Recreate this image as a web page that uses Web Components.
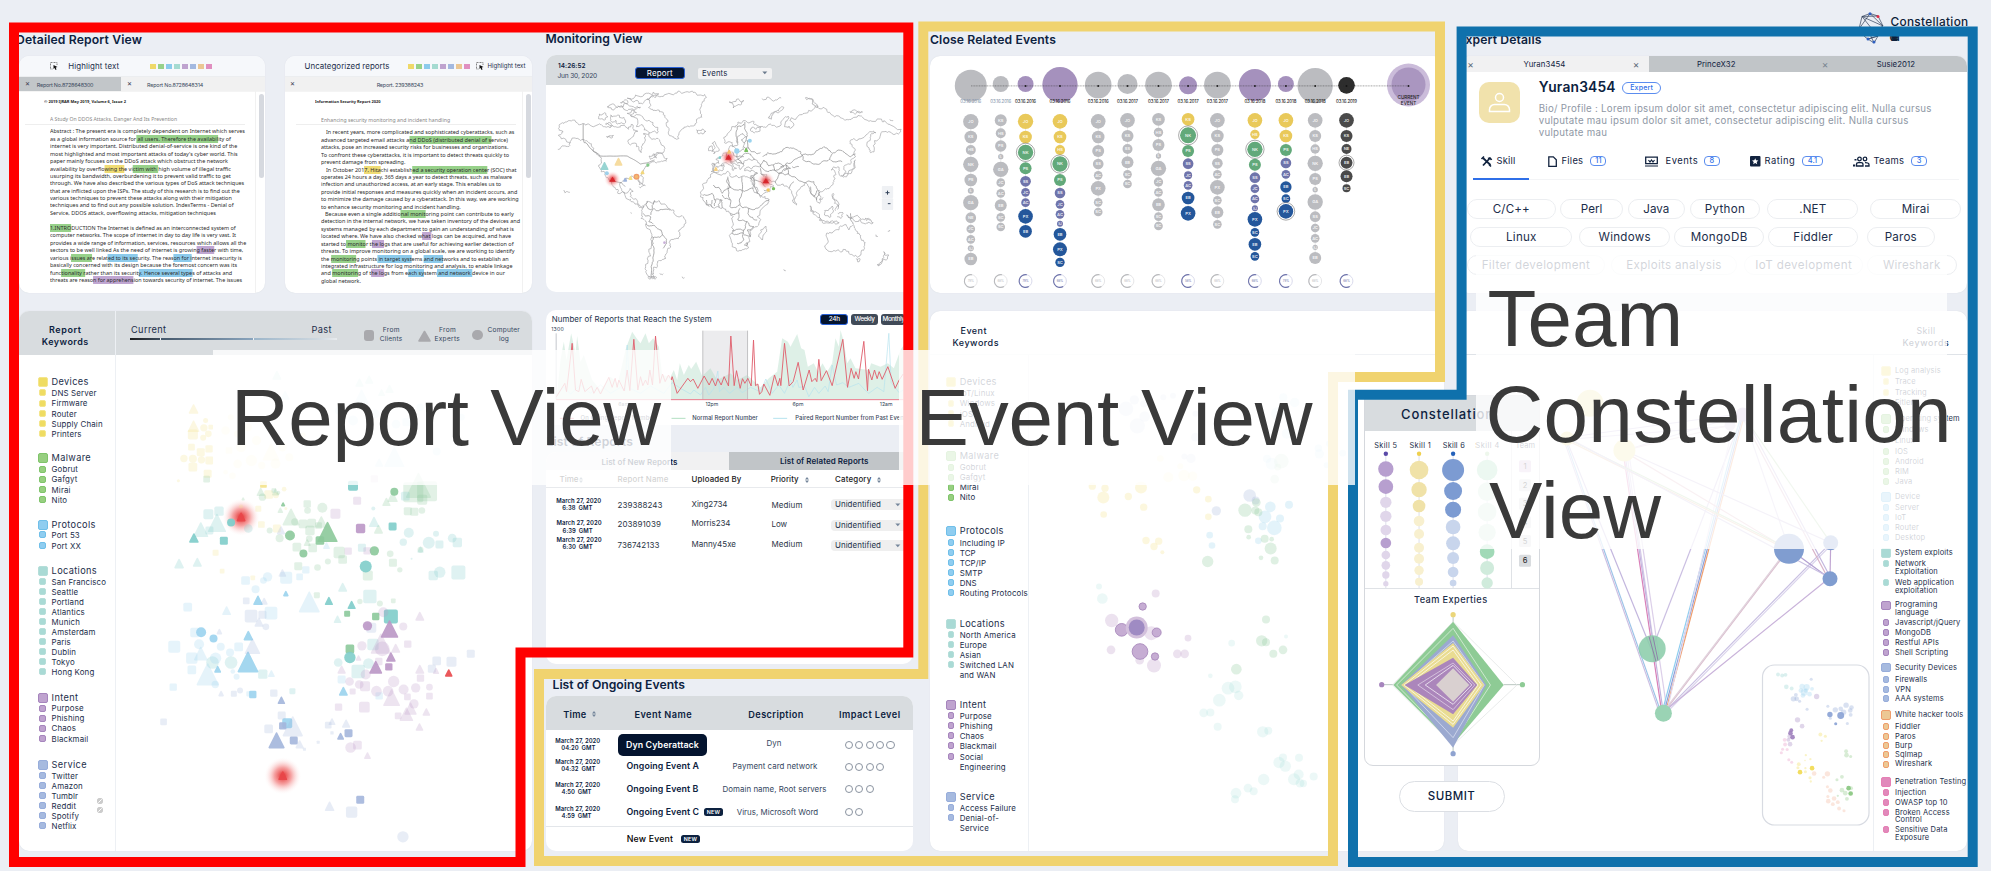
<!DOCTYPE html>
<html lang="en">
<head>
<meta charset="utf-8">
<title>Constellation Builder</title>
<style>
html,body{margin:0;padding:0}
body{width:1991px;height:871px;overflow:hidden;background:#ebeef4;font-family:Inter,"Liberation Sans",sans-serif;color:#0d2240}
</style>
</head>
<body>
<cb-app></cb-app>
<script>
const BASE = `<style>
:host{display:block;box-sizing:border-box}
*{box-sizing:border-box}
.stk{display:flex;flex-direction:column;flex:none}
.r{display:flex;height:6px;align-items:center;flex:none}
.c{flex:none;display:flex;align-items:center}
.t{white-space:pre;line-height:1.15;flex:none;display:inline-block;transform-origin:0 50%;margin-top:.7px}
.blk{flex:none}
svg{display:block;overflow:visible}
svg text{font-family:Inter,"Liberation Sans",sans-serif}
</style>`;
class Part extends HTMLElement {
  connectedCallback() {
    if (this.shadowRoot) return;
    const root = this.attachShadow({ mode: 'open' });
    root.innerHTML = BASE + this.view();
    for (const t of root.querySelectorAll('.t[data-w]')) {
      const want = +t.dataset.w, have = t.getBoundingClientRect().width;
      if (!want || !have) continue;
      if (t.dataset.m === 's') t.style.transform = `scaleX(${want / have})`;
      else t.style.letterSpacing = (want - have) / t.textContent.length + 'px';
    }
  }
}
/* text cell: x, fitted width (0 = natural), string, size, weight, colour */
const T = (x, w, s, fs = 8, fw = 400, col = '#1c2e4a', extra = '') =>
  ({ x, w, h: `<span class="t" ${w ? `data-w="${w}"` : ''} style="font-size:${fs}px;font-weight:${fw};color:${col};${extra}">${s}</span>` });
const B = (x, w, h, css, inner = '') =>
  ({ x, w, h: `<span class="c" style="justify-content:center;width:${w}px;height:${h}px;${css}">${inner}</span>` });
const rows = (x0, y0, list, w = '') => {
  let yb = y0, out = '';
  for (const [y, ...cells] of list) {
    let xb = x0;
    const inner = cells.map(c => { const m = c.x - xb; xb = c.x + c.w; return `<span class="c" style="margin-left:${m.toFixed(2)}px;width:${c.w}px">${c.h}</span>`; }).join('');
    out += `<div class="r" style="margin-top:${(y - 3 - yb).toFixed(2)}px">${inner}</div>`;
    yb = y + 3;
  }
  return `<div class="stk" ${w ? `style="width:${w}px"` : ''}>${out}</div>`;
};
/* vertical flow of blocks: [top, height, html] */
const blocks = (y0, list) => {
  let yb = y0;
  return list.map(([t, h, html]) => { const m = t - yb; yb = t + h; return `<div class="blk" style="margin-top:${m}px;height:${h}px">${html}</div>`; }).join('');
};
const f1 = n => (+n).toFixed(2);

/* ---------- section heading ---------- */
customElements.define('section-title', class extends Part {
  view() {
    const a = n => this.getAttribute(n);
    return `<style>:host{height:16px;display:flex;align-items:center;padding-left:${a('dx') || 0}px}</style>
    <span class="t" data-w="${a('w')}" style="font-size:12.2px;font-weight:600;color:#0d2240">${a('text')}</span>`;
  }
});

/* ---------- highlighted document ---------- */
const HL = { y: '#f0dc74', g: '#97d18a', b: '#8ccbec', p: '#c0a6d2' };
const SW = ['#efd969', '#97d18a', '#8ccbec', '#a5dbd1', '#bfa3cf', '#a3b9e0', '#ebc794', '#e08fc0'];
const swatches = '<span style="display:flex;gap:2.5px">' + SW.map(c => `<i style="width:5.5px;height:5.5px;background:${c}"></i>`).join('') + '</span>';
const pick = `<svg width="8" height="8" viewBox="0 0 16 16"><path d="M14 6V1H1v13h5" fill="none" stroke="#555" stroke-width="1.4" stroke-dasharray="2 1"/><path d="M7 6l8 4-3.5 1L13 15l-2 .8-1.6-3.6L7 14z" fill="#111"/></svg>`;
const K = 2.9037;
const DOC = {
  a: { x0: 19, w: 246, head: [['© 2019 IJRAR May 2019, Volume 6, Issue 2', 128, 366, 304]], sub: ['A Study On DDOS Attacks, Danger And Its Prevention', 145, 514, 357],
    ln: [[393,145,711,'Abstract : The present era is completely dependent on Internet which serves'],[417,145,670,'as a global information source for[g| all users. Therefore the availabil]ity of'],[438,145,689,'internet is very important. Distributed denial-of-service is one kind of the'],[460,145,690,"most highlighted and most important attacks of today's cyber world. This"],[483,145,662,'paper mainly focuses on the DDoS attack which obstruct the network'],[505,145,670,'availability by overflo[y|wing th]e vi[g|ctim with ]high volume of illegal traffic'],[528,145,670,'usurping its bandwidth, overburdening it to prevent valid traffic to get'],[549,145,709,'through. We have also described the various types of DoS attack techniques'],[573,145,696,'that are inflicted upon the ISPs. The study of this research is to find out the'],[594,145,673,'various techniques to prevent these attacks along with their mitigation'],[615,145,678,'techniques and to find out any possible solution. IndexTerms - Denial of'],[638,145,627,'Service, DDOS attack, overflowing attacks, mitigation techniques'],[684,145,684,'[g|1.INTRO]DUCTION The Internet is defined as an interconnected system of'],[705,145,685,'computer networks. The scope of internet in day to day life is very vast. It'],[727,145,715,'provides a wide range of information, services, resources which allows all the'],[749,145,706,'sectors to be well linked As the need of internet is growin[p|g faste]r with time,'],[772,145,702,'various i[g|ssues ar]e relat[b|ed to its sec]urity. The reas[b|on for i]nternet insecurity is'],[795,145,688,'basically concerned with its design because the foremost concern was its'],[817,145,674,'func[g|tionality r]ather than its securit[b|y. Hence several type]s of attacks and'],[840,145,703,'threats are reaso[p|n for apprehens]ion towards security of internet. The issues']] },
  b: { x0: 285, w: 247, head: [['Information Security Report 2020', 915, 1105, 304]], sub: ['Enhancing security monitoring and incident handling', 932, 1307, 360],
    ln: [[396,948,1495,'In recent years, more complicated and sophisticated cyberattacks, such as'],[419,932,1475,'advanced targeted email attacks a[g|nd DDoS (distributed denial of s]ervice)'],[441,932,1476,'attacks, pose an increased security risks for businesses and organizations.'],[464,932,1478,'To confront these cyberattacks, it is important to detect threats quickly to'],[486,932,1177,'prevent damage from spreading.'],[509,948,1501,'In October 201[y|7, Hita]chi establish[g|ed a security operation cente]r (SOC) that'],[531,932,1487,'operates 24 hours a day, 365 days a year to detect threats, such as malware'],[552,932,1455,'infection and unauthorized access, at an early stage. This enables us to'],[576,932,1502,'provide initial responses and measures quickly when an incident occurs, and'],[597,932,1506,'to minimize the damage caused by a cyberattack. In this way, we are working'],[621,932,1338,'to enhance security monitoring and incident handling.'],[642,943,1491,'Because even a single additio[g|nal monit]oring point can contribute to early'],[663,932,1510,'detection in the internal network, we have taken inventory of the devices and'],[687,932,1492,'systems managed by each department to gain an understanding of what is'],[708,932,1484,'located where. We have also checked w[p|hat ]logs can be acquired, and have'],[732,932,1491,'started to[g| monito]r t[p|he lo]gs that are useful for achieving earlier detection of'],[753,932,1494,'threats. To improve monitoring on a global scale, we are working to identify'],[777,932,1477,'the [g|monitorin]g points[b| in target syst]ems [b|and net]works and to establish an'],[798,932,1488,'integrated infrastructure for log monitoring and analysis, to enable linkage'],[819,932,1466,'and [g|monitorin]g of t[p|he lo]gs from e[b|ach sy]stem[b| and network ]device in our'],[843,932,1048,'global network.']] }
};
customElements.define('report-doc', class extends Part {
  view() {
    const k = this.getAttribute('doc'), d = DOC[k];
    const mark = s => s.replace(/\[(\w)\|([^\]]*)\]/g, (m, c, t) => `<mark style="background:${HL[c]};color:inherit">${t}</mark>`);
    const D = (x, r, s, fs, col, fw = 400) => T(x / K, (r - x) / K, mark(s), fs, fw, col, 'font-family:\'Noto Sans\',\'Open Sans\',sans-serif;line-height:1.02').h.replace('data-w', 'data-m="s" data-w');
    const cell = (x, r, s, fs, col, fw) => ({ x: x / K, w: (r - x) / K, h: D(x, r, s, fs, col, fw) });
    const top = k === 'a'
      ? rows(19, 56, [[66.4, B(50, 8, 8, '', pick), T(68.3, 51, 'Highlight text', 7.9), { x: 150.5, w: 62, h: swatches }]])
      : rows(285, 56, [[66.4, T(304.5, 85, 'Uncategorized reports', 7.9), { x: 408, w: 62, h: swatches }, B(476, 7, 8, '', pick), T(487.5, 38, 'Highlight text', 6)]]);
    const tab = k === 'a'
      ? `<div class="tab on" style="width:102px">${rows(19, 77, [[84.3, T(25, 4, '×', 7.5, 400, '#445'), T(36.8, 56.5, 'Report No.8728648300', 5.4, 400, '#3a4a60')]])}</div><div class="tab">${rows(121, 77, [[84.3, T(127, 4, '×', 7.5, 400, '#445'), T(147, 56, 'Report No.8728648314', 5.4, 400, '#3a4a60')]])}</div>`
      : `<div class="tab">${rows(285, 77, [[84.3, T(290, 4, '×', 7.5, 400, '#445'), T(376.7, 46.5, 'Report. 239388243', 5.4, 400, '#3a4a60')]])}</div>`;
    const body = [];
    d.head.forEach(h => body.push([h[3] / 3, cell(h[1], h[2], h[0], 4.2, '#222', 700)]));
    body.push([d.sub[3] / 3, cell(d.sub[1], d.sub[2], d.sub[0], 5.5, '#888')]);
    d.ln.forEach(l => body.push([l[0] / 3, cell(l[1], l[2], l[3], 5.9, '#2b2b2b')]));
    return `<style>:host{width:${d.w}px;height:237px;background:#fff;border-radius:10px;overflow:hidden;flex:none;box-shadow:0 0 1px #cfd4db}
    .bar{height:21px;background:#f6f8fb}.tabs{height:14px;display:flex;background:#f1f1f1;box-shadow:0 0 1px #bbb}.tab{height:14px;flex:1}.on{flex:none;background:#c2c6c9}
    .body{display:flex;height:202px;justify-content:space-between;background:linear-gradient(#eee,#eee) ${k === 'a' ? '6px' : '11px'} 33px/220px 1px no-repeat}
    .sb{width:10px;border-left:1px solid #f1f1f1;padding:3px 2.5px}.sb i{display:block;width:5px;height:84px;border-radius:3px;background:#d6d9df}</style>
    <div class="bar">${top}</div><div class="tabs">${tab}</div><div class="body">${rows(d.x0, 91, body, d.w - 10)}<div class="sb"><i></i></div></div>`;
  }
});

/* ---------- keyword lists ---------- */
const KC = { y: ['#efdc62', '#f4e58c'], g: ['#97cf80', '#7fc46b'], b: ['#8fcdf0', '#70bfe9'], t: ['#a9dad5', '#b5ded9'], p: ['#bfa3cf', '#a685bd'], n: ['#a6badf', '#97addb'], o: ['#ecc894', '#ef9d6c'], k: ['#e189bb', '#e680b4'] };
const KW = {
  report: { x0: 19, sq: 42.8, tx: 51.6, w: 96, hf: 9.2, f: 7.9, d: 'y*381.3 Devices|y392.3 DNS Server|y403 Firmware|y413.3 Router|y423.3 Supply Chain|y433.3 Printers|g*457.3 Malware|g469 Gobrut|g479 Gafgyt|g489.3 Mirai|g499.3 Nito|b*524.3 Protocols|b534.3 Port 53|b545.3 Port XX|t*570.3 Locations|t581.3 San Francisco|t591.3 Seattle|t601.3 Portland|t611.3 Atlantics|t621.3 Munich|t631.3 Amsterdam|t641.3 Paris|t651.3 Dublin|t661.3 Tokyo|t671.3 Hong Kong|p*697.3 Intent|p708 Purpose|p718 Phishing|p728 Chaos|p738.3 Blackmail|n*764.3 Service|n775.3 Twitter|n785.3 Amazon|n795.3 Tumblr|n805.3 Reddit|n815.3 Spotify|n825.3 Netflix' },
  event: { x0: 930, sq: 951, tx: 959.7, w: 98, hf: 9.2, f: 7.9, d: 'y*381.3 Devices|y392.3 IoT/Linux|y403 Windows|y413.3 iOS|y423.3 Android|g*455.3 Malware|g467 Gobrut|g477 Gafgyt|g487 Mirai|g497 Nito|b*530.3 Protocols|b542.3 Including IP|b552.3 TCP|b562.3 TCP/IP|b572.3 SMTP|b582.3 DNS|b592.3 Routing Protocols|t*623.3 Locations|t634.3 North America|t644.3 Europe|t654.3 Asian|t664.3 Switched LAN|-674.3 and WAN|p*704.3 Intent|p715.3 Purpose|p725.3 Phishing|p735.3 Chaos|p745.3 Blackmail|p756.3 Social|-766.3 Engineering|n*796.7 Service|n807.3 Access Failure|n817.3 Denial-of-|-827.3 Service' },
  skill: { x0: 1874, sq: 1886.4, tx: 1895.5, w: 93, hf: 7.5, f: 7.5, d: 'y*370.3 Log analysis|y381.3 Trace|y392.3 Tracking|-402.3 Fitler|g*418.3 Operating system|g429.3 Windows|-440.3 Linux|g451.3 IOS|g461.3 Android|g471.3 RIM|g481.3 Java|b*496.3 Device|b507.3 Server|b517.3 IoT|b527.3 Router|b537.3 Desktop|t*552.3 System exploits|t563.3 Network|-571.3 Exploitation|t582.3 Web application|-590.3 exploitation|p*604.8 Programing|-612.3 language|p622.3 Javascript/jQuery|p632.3 MongoDB|p642.3 Restful APIs|p652 Shell Scripting|n*667 Security Devices|n679 Firewalls|n689 VPN|n698.3 AAA systems|o*714.3 White hacker tools|o726 Fiddler|o736 Paros|o745 Burp|o754.3 Sqlmap|o764 Wireshark|k*781.3 Penetration Testing|k792.3 Injection|k802.3 OWASP top 10|k812.3 Broken Access|-820 Control|k829.3 Sensitive Data|-837.3 Exposure' }
};
customElements.define('keyword-list', class extends Part {
  view() {
    const c = KW[this.getAttribute('kind')];
    const list = c.d.split('|').map(s => {
      const m = s.match(/^(.)(\*?)([\d.]+) (.*)$/), big = !!m[2], z = big ? 9.5 : 6.8;
      const cells = [];
      if (m[1] !== '-') { const q = KC[m[1]]; cells.push(B(c.sq - z / 2, z, z, `background:${q[0]};border:.8px solid ${q[1]};border-radius:2px`)); }
      cells.push({ x: c.tx, w: 10, h: `<span class="t" style="font-size:${big ? c.hf : c.f}px;letter-spacing:${big && c.hf > 8 ? .35 : .14}px;color:#1c2e4a;font-weight:400">${m[4]}</span>` });
      return [+m[3], ...cells];
    });
    return `<style>:host{width:${c.w}px;height:497px;flex:none}</style>${rows(c.x0, 354, list)}`;
  }
});

/* ---------- scatter plots ---------- */
const FC = { y: '#f4e38a', g: '#8cc99b', t: '#7fcdca', b: '#9bd3ee', n: '#a4b6dc', p: '#bb97c6', r: '#e9474a' };
const shape = (k, x, y, s, col, op, kx) => {
  const X = x / kx, Y = y / 3, h = s / 6;
  const a = `fill="${col}" opacity="${op}"`;
  if (k === 'c') return `<circle cx="${f1(X)}" cy="${f1(Y)}" r="${f1(h)}" ${a}/>`;
  if (k === 's') return `<rect x="${f1(X - h)}" y="${f1(Y - h)}" width="${f1(2 * h)}" height="${f1(2 * h)}" rx="${f1(Math.min(2, h * .35))}" ${a}/>`;
  return `<path d="M${f1(X)} ${f1(Y - h + .5)}L${f1(X + h - .7)} ${f1(Y + h - .9)}H${f1(X - h + .7)}Z" ${a} stroke="${col}" stroke-width="1.6" stroke-linejoin="round"/>`;
};
const plot = (txt, kx, lo, hi) => txt.trim().split(/\n/).map(l => {
  const [h, ...it] = l.trim().split(/\s+/), col = FC[h[0]], op = h[1] === '!' ? hi : lo;
  return it.map(i => { const k = i[0], [x, y, s] = i.slice(1).split(','); return shape(k, +x, +y, +s, col, op, kx); }).join('');
}).join('');
const RS = `
y t562,326,28 t562,378,34 s560,402,30 c597,360,15 c592,382,22 c605,400,20 c590,412,18 s612,380,14 s556,440,20 s583,455,24 s607,445,22 c534,474,22 c560,475,24 c585,478,22 s608,480,24 s560,500,26 s603,520,24 c518,541,9 c670,350,18 c655,390,26 c690,400,22 c720,380,24 c745,420,28 c700,440,30 s665,450,20 t787,455,50 c730,480,34 c690,490,26 c760,495,22 c800,490,30 c820,440,26 c840,470,24 c880,404,16 c675,526,20 c655,515,14 s780,582,26 c825,566,14 c801,584,18 s750,625,18 s759,672,20 s804,684,24 s626,757,18 s645,812,14 s734,832,14 c830,624,9 c700,618,12
y! s765,552,20
g s600,536,20 t757,575,24 c762,590,22 t800,575,20 s795,570,14 t706,596,9 c808,577,12 t814,630,16 c893,630,20 s892,610,22 c936,622,30 t845,650,50 c856,664,22 s880,670,26 s905,668,26 s900,690,28 s925,675,20 t933,665,34 c812,713,24 c783,690,18 s862,740,26 s908,742,26 t892,727,20 c898,715,20 s985,756,34 s995,777,26 c952,783,18 s866,797,24 c922,801,20 t1099,687,26 t1122,605,24 t1140,590,30 t1215,555,75 s1240,572,60 s1200,575,60 s1226,598,30 s1184,632,24 s1203,634,24 c1225,630,20 c1133,760,20 s1141,787,24 s1068,825,30 c1161,808,16 c1221,748,18 s920,884,18 c1045,903,16 c1103,909,18 s1142,901,14
g! t822,612,12 c842,705,30 c881,759,24 s929,720,26 t951,695,60 c1145,574,24 c1087,751,28 s1008,940,18 s1091,948,22 s1016,1045,26
t s605,641,30 s636,632,28 t630,668,54 t583,688,44 s608,690,24 t520,790,28 t573,786,26 t1086,665,30 s1051,742,24 t995,861,26 s1074,888,40 t980,957,22 c1084,624,12 c1187,697,30 c1171,725,22 c1245,727,36 c1266,700,18 s1276,732,24 s1328,726,28 c1313,713,26 s1331,816,42 s1258,825,28 c1277,815,34 c617,1086,38 c671,1086,38 s763,1121,28 c982,1086,26 s1083,1032,34 c1070,1089,32 s1040,1113,40 c1195,775,6 t804,225,26 t1044,247,24 t1072,238,24 t1131,266,24 t1108,277,20 s849,1172,18 s1177,587,26 c721,684,26 t1221,748,18
t! s1025,556,30 c671,666,24 t563,713,28 s650,721,24 s1140,678,24 c1062,798,36 t955,902,24 t1021,914,24 c1016,1071,34 s1135,948,42
b t828,285,26 t1050,290,44 c985,330,26 c1025,360,30 c1090,340,26 c1150,371,26 s1180,365,24 c1220,320,22 t1145,470,60 t1101,487,24 c1268,453,24 c1340,350,20 s713,840,26 c742,866,24 c777,829,28 c765,840,20 s831,832,36 s870,829,20 s888,808,22 t948,736,20 t898,905,62 s787,938,38 s545,920,26 t658,931,26 s566,996,28 s506,1039,36 c578,1031,30 s557,1073,34 t583,1060,40 c626,1073,34 c641,1039,24 s693,1039,26 c668,1056,24 t603,1122,66 s557,1108,26 c625,1152,22 s503,1160,22 c687,1129,18 t788,1120,20 s992,1137,24 s723,1180,16 s1101,1186,22 c676,1113,14
b! t830,880,16 t749,900,28 c584,995,30 c620,1014,24 t721,1006,28 t720,1085,62 t632,1107,20 s734,1182,22 t997,1173,26 s834,1268,30
n s715,901,20 t767,903,20 s729,947,38 s762,943,24 t752,966,26 c772,979,20 t637,994,16 t733,1038,46 t642,1180,16 s679,1180,18 c697,1170,18 s795,1178,22 s818,1245,24 s780,1285,26 t850,1278,60 s475,1264,20 s953,1274,20 t964,1264,20 t1005,1270,24 s964,1297,10 s924,1325,9 t870,1332,24 s884,1346,9 s1268,1081,26 s1311,1084,30 s1367,1060,24 s1254,1105,24 t957,1518,28 s1021,1535,34 c1170,1609,34 s1078,982,30 t820,818,22 t816,690,24
n! t817,1200,22 s821,1276,22 s853,1320,24 t803,1320,48 s1012,1298,24 t989,1308,20 s1046,1498,24
p s1087,535,22 s1037,601,24 s974,640,30 s1011,752,22 s1066,751,22 c1113,935,30 t1219,948,26 c1171,978,24 s1184,1031,22 t1106,1030,60 c1110,1045,44 c1051,1036,28 t1149,1044,26 s1100,1083,22 t1041,1073,16 c1015,1143,26 t992,1108,24 s1024,1173,18 s1060,1157,30 c1043,1152,26 c1062,1122,30 c1093,1172,32 c1127,1172,32 t1137,1192,50 c1143,1143,34 c1172,1167,30 c1207,1162,28 c1247,1160,20 s1183,1189,20 s1247,1187,20 t1219,1107,26 s1221,1133,22 t1266,1112,18 s983,1220,22 s1058,1220,32 c1202,1210,28 t1192,1225,36 t1180,1242,40 s1156,1246,20 t1238,1235,22 t1218,1280,22 c1018,1341,32 s1038,1334,26 t1067,1366,20
p! s1047,684,28 c1067,976,28 t1131,986,52 t1135,1070,28 t1091,1101,38 s1129,1099,22
r! t1303,1118,22`;
const ES = `
n c630,325,44 c664,376,46 c686,348,32 c655,298,28 c683,310,22 c742,290,18 c771,286,18 c838,340,18 c838,410,26 c805,468,18 c825,474,28 c1001,585,38 c1019,600,24 c901,631,28
b c1102,290,24 c1136,306,28 c1112,400,30 c1085,340,40 c1210,460,28 c1207,443,22 c1240,430,20 c1280,458,20 c1053,475,24 c1067,490,36 c1232,494,18 c1063,619,32 c1119,613,24 c1047,649,38 c1092,654,24 c1075,682,44 c1040,677,24 c1027,721,20 c881,704,20 c888,735,20
y c733,474,20 c793,497,18 c757,530,30 c804,525,34 c830,527,28 c529,557,22 c567,563,22 c562,591,36 c637,588,22 c675,561,36 c683,620,22 c563,642,20 c842,568,22 c877,596,20 c877,649,20 c690,720,22 c728,722,22 c714,738,22 c739,755,12
g c1096,482,44 c1085,500,20 c1076,536,26 c987,629,40 c1018,630,24 c1027,635,24 c1021,606,26 c997,686,24 c998,710,14 c1046,715,24 c1067,716,14 c1064,744,36 c1076,780,24 c1035,772,14 c875,783,34 c1050,957,24 c1037,1021,34 c1050,1025,24 c1101,1048,26 c1072,1060,24 c961,1106,32
p c719,879,24 c587,960,40 c706,998,42 c585,1048,26 c671,1079,26 c714,1095,42 c816,1013,20 c784,1060,26 c806,1060,26`;
const EST = 'c549,858,18 c559,894,32 c1110,1008,12 c947,1028,20 c883,1126,14 c936,1163,38 c958,1159,38 c968,1185,28 c910,1199,38 c863,1237,26 c883,1236,24 c905,1279,24 c1040,1294,34 c1057,1291,24 c1089,1386,34 c1101,1371,24 c1108,1397,34 c1149,1372,24 c1148,1422,30 c1134,1436,36 c1152,1448,26 c1162,1449,22 c1193,1428,24 c1043,1437,34 c996,1463,26 c1013,1472,24 c960,1478,32 c957,1496,24';
customElements.define('keyword-scatter', class extends Part {
  view() {
    let g;
    const w = 416;
    if (this.getAttribute('kind') === 'report') {
      const halo = (x, y) => `<circle cx="${x / K}" cy="${y / 3}" r="19" fill="url(#h)"/>`;
      g = `<g transform="translate(-116,-54.5)"><defs><radialGradient id="h"><stop offset=".1" stop-color="#e63c3c" stop-opacity=".95"/><stop offset=".45" stop-color="#ee5a5a" stop-opacity=".55"/><stop offset="1" stop-color="#fff" stop-opacity="0"/></radialGradient></defs>${halo(700, 650)}${halo(821, 1426)}
      ${plot(RS.replace(/c671,666,24 /, ''), K, .25, .9)}${plot('r! t700,650,26 t821,1426,26\nt! c671,666,24', K, .3, .95)}</g>`;
    } else {
      const ring = (x, y, s) => `<circle cx="${x / 3}" cy="${y / 3}" r="${s / 6}" fill="#c6add3" stroke="#a98abc" stroke-width=".9"/>`;
      g = `<g transform="translate(-113,-54.5)">${plot(ES, 3, .28, .9)}${plot('t ' + EST, 3, .15, .9)}
      ${ring(680, 918, 22)}${ring(617, 988, 38)}${ring(722, 996, 27)}${ring(672, 1053, 47)}${ring(717, 1068, 22)}<circle cx="220.7" cy="327" r="11" fill="#d3c0dc"/><circle cx="220.7" cy="327" r="8" fill="#9f8bc3"/></g>`;
    }
    return `<style>:host{width:${w}px;height:497px;border-left:1px solid #edf0f4}</style><svg width="${w}" height="496" style="overflow:hidden">${g}</svg>`;
  }
});

customElements.define('report-keywords', class extends Part {
  view() {
    const c = '#34465e';
    return `<style>:host{position:relative;width:513px;height:540px;background:#fff;border-radius:10px;overflow:hidden;box-shadow:0 0 1px #cfd4db}
    .h{height:43.5px;background:#d8dcdf;display:flex}.k{width:97px;border-right:1px solid #edf0f4}.b{display:flex}
    .edit{position:absolute;left:77.5px;top:487px;display:flex;flex-direction:column;gap:3px}.e{width:6px;height:6px;border-radius:2px;border:1px solid #ccc;background:linear-gradient(135deg,#ccc 42%,#fff 42% 58%,#ccc 58%)}
    </style><div class="h"><div class="k">${rows(19, 311, [[329.7, T(49, 32.5, 'Report', 9, 600, '#0d2240')], [341.8, T(41.7, 47, 'Keywords', 9, 600, '#0d2240')]])}</div>
    ${rows(116, 311, [[330.3, T(131, 35.5, 'Current', 9.2), T(311.5, 20.5, 'Past', 9.2)], [339, B(130.3, 206.5, 2.6, 'background:linear-gradient(90deg,#1c1c1e 0,#3d4d5e 14.5%,#eef1f4 14.6% 15%,#45586b 15.1%,#8aa5be 59.5%,#eef1f4 59.6% 60%,#9db6ca 60.1%,#cdd7df 90%,#e8ebee)')]], 245)}
    ${rows(361, 311, [[335.5, B(363.6, 10.5, 10.5, 'background:#a9a9ad;border-radius:3px')]], 15)}
    ${rows(376, 311, [[330.8, T(382.8, 17, 'From', 6.6, 400, c)], [339.7, T(379.8, 22.5, 'Clients', 6.6, 400, c)]], 40)}
    ${rows(416, 311, [[335.5, B(417.5, 13, 12, '', '<svg width="13" height="12"><path d="M6.5 1.5L12 11H1z" fill="#a9a9ad" stroke="#a9a9ad" stroke-width="1.6" stroke-linejoin="round"/></svg>')]], 15)}
    ${rows(431, 311, [[330.8, T(439, 17, 'From', 6.6, 400, c)], [339.7, T(434.5, 25.5, 'Experts', 6.6, 400, c)]], 40)}
    ${rows(471, 311, [[335, B(472, 10.5, 10.5, 'background:#a9a9ad;border-radius:50%')]], 14)}
    ${rows(485, 311, [[330.8, T(487.5, 32.5, 'Computer', 6.6, 400, c)], [339.7, T(499, 10, 'log', 6.6, 400, c)]])}
    </div><div class="b"><keyword-list kind="report"></keyword-list><keyword-scatter kind="report"></keyword-scatter></div>
    <span class="edit"><i class="e"></i><i class="e"></i></span>`;
  }
});
customElements.define('event-keywords', class extends Part {
  view() {
    return `<style>:host{width:514px;height:540px;background:#fff;border-radius:10px;overflow:hidden;box-shadow:0 0 1px #cfd4db}.h{height:43.5px;border-bottom:1px solid #f0f2f5}.b{display:flex}</style>
    <div class="h">${rows(930, 311, [[330.7, T(960.5, 26.5, 'Event', 9, 500, '#0d2240')], [342.5, T(952.5, 46.5, 'Keywords', 9, 500, '#0d2240')]])}</div><div class="b"><keyword-list kind="event"></keyword-list><keyword-scatter kind="event"></keyword-scatter></div>`;
  }
});

/* ---------- world map ---------- */
const COAST = ['82,448 100,438 118,428 92,416 84,405 98,395 84,385 96,368 118,362 140,368 158,371 205,373 222,380 245,375 262,382 282,376 294,388 303,372 310,392 322,394 302,415 296,432 318,440 332,458 336,432 345,420 338,402 356,400 372,417 385,418 400,438 400,450 378,458 372,470 398,466 410,475 390,485 372,485 352,495 338,515 330,527 335,552 326,545 320,530 300,536 284,540 272,548 273,570 286,580 298,566 308,574 303,592 318,598 322,612 340,620 318,612 300,598 262,580 248,560 236,540 226,530 212,515 205,495 208,470 190,445 172,425 158,418 140,415 118,430',
  '350,298 375,285 415,280 470,275 510,285 528,292 515,310 510,335 514,352 498,365 480,378 460,385 445,405 438,418 425,410 414,395 408,378 412,360 400,345 380,330 362,328 358,310 350,298',
  '498,390 515,387 526,394 518,402 502,400 498,390', '290,295 315,285 350,280 385,282 372,292 345,300 335,312 310,306 290,295', '206,342 222,338 232,350 222,360 204,356 206,342', '230,320 250,312 262,322 248,330 230,320', '240,345 262,345 280,352 285,368 262,372 240,362 240,345', '262,318 290,312 330,322 312,332 280,328 262,318', '300,345 330,345 352,362 382,382 380,400 362,398 340,382 318,380 322,366 300,345', '225,372 238,368 242,378 225,372', '290,340 308,330 318,338 300,345 290,340', '270,308 288,300 290,312 270,308', '228,410 248,405 240,414 228,410', '326,560 345,557', '325,540 342,556', '100,570 118,577', '356,468 372,462 378,474 360,478 356,468',
  '340,620 350,604 372,602 400,612 420,628 432,642 460,655 466,667 452,685 448,705 430,718 420,742 406,762 398,778 385,782 380,795 368,805 365,822 372,834 358,830 348,812 352,790 358,760 364,710 360,692 345,675 332,655 334,640 340,620',
  '352,832 378,832 366,836 352,832', '546,492 580,494 572,512 556,518 542,515 544,492 566,490 556,478 572,470 588,458 598,455 597,440 608,438 615,455 640,448 643,430 632,420 648,410 636,400 620,415 622,432 606,440 596,425 582,428 580,412 592,400 604,380 625,366 645,362 672,374 690,380 680,396 660,392 664,382 676,388 700,382 722,374 752,374 765,350 775,352 762,380 780,385 790,372 778,360 796,358 822,340 852,325 880,322 905,345 935,355 962,358 990,348 1020,362 1060,362 1112,388 1104,402 1080,396 1050,405 1032,422 1020,458 1010,440 1020,415 1036,398 1010,402 975,420 958,430 972,445 975,470 962,490 948,495 940,500 944,518 930,528 926,505 910,500 902,510 915,520 910,545 900,560 875,575 862,572 872,592 868,610 858,600 850,585 838,568 825,548 812,560 796,590 798,615 786,600 775,565 758,552 735,548 712,540 692,522 712,548 730,558 718,575 690,588 680,580 662,545 660,530 680,518 660,515 642,512 648,502 690,500 682,488 650,480 640,498 628,508 612,490 600,482 618,505 608,512 590,490 572,498 580,494',
  '545,430 552,424 560,440 566,452 550,462 545,452 552,446 545,430', '536,440 545,438 545,455 534,452 536,440',
  '548,518 590,514 600,530 632,530 660,535 668,560 690,592 716,598 712,612 680,650 680,680 660,700 658,725 640,748 618,752 602,700 608,670 600,640 575,622 545,622 518,600 516,570 530,540 548,518', '690,690 705,678 708,690 696,720 688,712 690,690',
  '888,700 915,690 930,678 950,680 955,690 968,674 980,700 1000,725 1002,745 988,768 970,768 955,755 938,748 912,752 895,754 886,735 888,700', '978,776 988,776 982,786 978,776', '1060,755 1075,765 1062,778 1045,798 1040,794 1060,772 1060,755',
  '838,618 855,635 872,658 862,652 838,618', '866,660 900,664 926,668 898,668 866,660', '882,632 905,618 908,636 898,652 882,645 882,632', '922,640 935,636 930,655 920,650', '948,645 975,648 1005,655 1028,668 1000,670 970,660 948,645', '908,580 918,600 924,620 912,610 908,580', '915,632 924,615 920,628',
  '932,528 950,520 968,508 975,480 968,505 950,525 938,532', '715,355 722,340 760,322 735,335 722,358 715,355', '596,306 618,298 640,302 628,315 608,324 596,306', '694,296 715,292 738,300 752,294', '825,293 842,296 858,312 862,322 845,312 825,293', '958,335 975,330 996,336 975,342 958,335', '866,598 878,592', '388,820 398,821', '455,830 462,833', '760,808 766,811', '1036,704 1042,710', '1072,694 1078,690', '300,638 304,640', '1005,655 1020,660', '1078,358 1088,360'];
const BORD = ['158,371 158,418', '208,468 290,468 312,480 330,492 352,488 372,480', '236,542 256,545 272,548 284,560', '158,418 170,432 190,455 208,468', '338,640 360,650 355,665 368,672', '372,602 366,625 385,632 400,628 420,630', '350,604 352,625 366,628 360,645', '345,672 368,676 392,690 396,705 408,718 404,735 398,745', '365,710 376,712 396,705', '368,712 370,750 362,800 364,830', '548,556 565,562 575,580 600,560 592,535', '592,530 596,560 635,572 635,530', '516,585 545,580 552,600 575,600 575,622', '545,600 545,622', '528,600 536,620', '635,572 628,615 600,622 600,600 592,560', '575,585 600,600', '635,572 668,565', '628,615 655,625 680,625 716,600', '655,625 658,650 680,660', '600,640 625,640 622,660 650,665 640,690 605,692', '640,690 640,720 620,730', '650,665 670,680 650,690 660,710 640,705', '604,700 640,700', '625,640 628,625', '642,735 650,728 648,738 642,735', '570,598 566,622', '556,600 552,618', '605,455 620,470 640,462 660,462 672,480', '588,460 595,480 612,485', '552,492 550,515', '622,430 620,380 640,372', '643,366 650,400 640,430', '650,420 662,455 690,458', '610,480 640,470', '620,455 625,480 640,492', '640,440 655,445', '615,482 635,490', '697,470 712,458 745,458 770,442 800,450 815,465 850,462 880,440 905,460 935,452 960,470 975,462', '700,480 690,500 712,515 740,510 760,500 735,490 715,498 700,480', '815,465 828,485 868,492 898,478 905,462', '815,465 790,480 765,492 770,505 745,520 735,548', '770,505 785,530 825,548 850,545 862,572', '728,495 745,520 775,520', '662,530 690,545 705,560', '690,505 700,530', '670,530 680,580', '785,500 805,500', '775,565 790,545', '840,560 850,590 858,572', '868,575 858,600', '960,640 968,672', '700,570 715,570', '660,535 682,520', '750,500 765,495 780,505 760,512', '900,480 935,485'];
const wiggle = (s, amp) => {
  let p = s.split(' ').map(q => q.split(',').map(Number)), seed = 7;
  const rnd = () => ((seed = (seed * 16807 + 11) % 2147483647) / 2147483647 - .5);
  for (let n = 0; n < 3; n++) {
    const o = [p[0]];
    for (let i = 1; i < p.length; i++) {
      const [a, b] = p[i - 1], [c, d] = p[i], L = Math.hypot(c - a, d - b);
      if (L > 5) o.push([(a + c) / 2 + rnd() * amp * Math.min(L, 24), (b + d) / 2 + rnd() * amp * Math.min(L, 24)]);
      o.push(p[i]);
    }
    p = o;
  }
  return 'M' + p.map(q => q.map(n => n.toFixed(1)).join(' ')).join('L');
};
customElements.define('monitor-map', class extends Part {
  view() {
    const tri = (x, y, s, c) => `<path d="M${x} ${y - s}L${x + s} ${y + s}H${x - s}Z" fill="${c}" stroke="${c}" stroke-width="4" stroke-linejoin="round"/>`;
    const dot = (x, y, r, c) => `<circle cx="${x}" cy="${y}" r="${r}" fill="${c}"/>`;
    const halo = (x, y, r) => `<circle cx="${x}" cy="${y}" r="${r}" fill="url(#h)"/><path d="M${x} ${y - 8}l10 15h-20z" fill="#d8262c"/>`;
    return `<style>:host{width:367.5px;height:237px;background:#fff;border-radius:10px;overflow:hidden}.h{height:30px;background:#d8dcdf;display:flex}</style>
    <div class="h">${rows(545.5, 55, [[66.7, T(558, 27.5, '14:26:52', 6.4, 600, '#0d2240')], [76.4, T(557.5, 39.5, 'Jun 30, 2020', 6.6, 400, '#34465e')]], 80)}
    ${rows(625.5, 55, [[73, B(634.5, 50.5, 12, 'background:#04142f;border:1px solid #2a62d8;border-radius:3px', T(0, 26, 'Report', 8, 400, '#fff').h), B(698, 73.5, 11, 'background:#f2f2f3;border-radius:2px;justify-content:space-between;padding:0 4px', T(0, 25.5, 'Events', 7.8, 400, '#1c2e4a').h + '<svg width="6" height="4"><path d="M.3.5h5L2.8 3.2z" fill="#6b7a8d"/></svg>')]])}</div>
    <svg width="367.5" height="207" viewBox="46.5 255 1102.5 621" style="overflow:hidden"><defs><radialGradient id="h"><stop offset=".1" stop-color="#dc2a30" stop-opacity=".9"/><stop offset=".5" stop-color="#ee5a5a" stop-opacity=".4"/><stop offset="1" stop-color="#fff" stop-opacity="0"/></radialGradient></defs>
    <g fill="none" stroke="#a2a2a4" stroke-width="2" stroke-linejoin="round">${COAST.map(s => `<path d="${wiggle(s, .6)}"/>`).join('')}</g><g fill="none" stroke="#858587" stroke-width="2">${BORD.map(s => `<path d="${s === BORD[0] ? 'M158 371V418' : wiggle(s, s[0] === '2' ? .05 : .35)}"/>`).join('')}</g>
    ${halo(246, 538, 26)}${halo(594, 472, 27)}${halo(706, 543, 28)}
    ${tri(222, 498, 10, '#98d4d2')}${tri(264, 485, 10, '#f6dca0')}${dot(229, 520, 6, '#9fd0ea')}${tri(284, 539, 4, '#9db2da')}${tri(300, 534, 4, '#f4e38a')}${dot(318, 530, 9, '#ef9d6c')}${dot(318, 530, 5, '#f3b96f')}${tri(336, 517, 4, '#f2d77c')}${dot(352, 495, 5, '#86c98b')}
    ${dot(619, 453, 8, '#9bd3ee')}${dot(658, 422, 6, '#9bd3ee')}${tri(596, 455, 4, '#f6bf6a')}${tri(647, 450, 4, '#78bf5d')}${dot(568, 473, 4, '#7fcdca')}${tri(556, 507, 4, '#f6d080')}${dot(713, 570, 5, '#f4c65a')}${dot(729, 566, 5, '#78bf5d')}${dot(402, 728, 4, '#c9b0d8')}
    <rect x="1054" y="558" width="34" height="36" rx="3" fill="#eff1f4"/><rect x="1054" y="595" width="34" height="35" rx="3" fill="#eff1f4"/><path d="M1065 578h12M1071 572v12M1072 611h8" stroke="#33435a" stroke-width="3"/></svg>`;
  }
});

/* ---------- trend chart ---------- */
const RED = '78,290 103,250 108,275 125,130 135,270 145,275 152,238 163,275 183,258 190,280 200,262 210,282 235,232 245,262 254,235 260,262 265,240 281,273 290,210 298,272 310,118 322,270 330,230 337,257 345,240 352,255 358,210 366,255 375,108 388,250 396,222 404,245 414,225 422,240 425,230 440,280 472,235 480,245 488,237 502,265 521,228 536,255 545,235 555,258 562,236 572,255 581,230 594,258 601,108 611,257 618,212 629,265 636,236 643,250 652,235 662,258 669,120 675,257 682,252 687,283 694,275 700,252 718,286 732,225 742,257 748,235 751,257 762,130 776,258 788,245 803,187 818,270 836,210 844,245 854,235 859,245 865,178 872,242 888,212 905,257 937,118 951,262 962,205 971,235 976,215 984,237 1000,124 1011,272 1014,208 1024,240 1032,210 1040,236 1046,215 1055,238 1072,200 1094,265 1106,240 1118,222';
const AREA = '78,298 90,180 100,125 108,180 122,100 135,160 140,108 150,185 160,165 185,240 210,270 240,230 262,250 285,150 290,135 305,95 318,115 330,130 345,100 355,130 368,115 385,140 395,225 420,230 430,210 440,240 448,190 460,225 475,195 482,207 497,185 515,228 540,205 560,240 600,220 620,240 650,225 690,262 715,235 740,215 755,115 772,125 780,140 800,102 812,145 822,150 832,200 850,190 862,215 876,190 890,215 905,190 915,115 925,140 930,90 940,125 950,190 960,175 975,205 1015,210 1022,190 1050,200 1072,190 1090,205 1110,150 1120,135 1120,298';
const BLUE = '78,285 100,262 120,282 150,255 180,280 210,255 240,280 270,262 284,272 290,135 298,265 330,280 360,258 400,280 425,248 450,265 480,282 490,270 510,285 525,262 535,285 550,265 562,213 567,275 580,262 597,280 620,262 635,278 660,262 690,275 706,237 725,280 745,255 762,280 780,240 787,262 800,240 805,262 823,260 835,290 852,262 865,280 884,258 893,275 905,195 918,255 937,248 955,262 985,250 1003,270 1015,280 1040,262 1060,275 1075,100 1082,248 1106,278 1118,270';
customElements.define('trend-chart', class extends Part {
  view() {
    const t = (x, y, s, w) => `<text x="${x}" y="${y}" font-size="15.5" textLength="${w}" fill="#2b3b52">${s}</text>`;
    return `<style>:host{width:367.5px;height:115px;background:#fff;border-radius:10px 10px 0 0;overflow:hidden;display:flex;flex-direction:column}</style>
    ${rows(545.5, 310, [[319.3, T(551.7, 160, 'Number of Reports that Reach the System', 7.9, 400, '#22324a'), B(820.5, 27.5, 11.5, 'background:#04142f;border:1px solid #2a62d8;border-radius:3px', T(0, 11, '24h', 6.4, 500, '#fff').h), B(851, 27, 11, 'background:#404a57;border-radius:3px', T(0, 20, 'Weekly', 6.4, 500, '#fff').h), B(881.5, 24, 11, 'background:#404a57;border-radius:3px', T(0, 22, 'Monthly', 6.4, 500, '#fff').h)]])}
    <svg width="367.5" height="102" viewBox="46.5 69 1102.5 306" style="margin-top:.7px;flex:none;overflow:hidden">
    <rect x="516" y="92" width="137" height="206" fill="#ececee"/>
    <polygon points="${AREA}" fill="#a9d8c0" opacity=".38"/><polyline points="${BLUE}" fill="none" stroke="#b5e3ee" stroke-width="2"/>
    <path d="M517 92V298M651 92V298" stroke="#c4c4c6" stroke-width="3"/><path d="M77 100V298" stroke="#b5b9c2" stroke-width="2.4"/>
    <polyline points="${RED}" fill="none" stroke="#e0606e" stroke-width="2.8"/><path d="M77 299H1119" stroke="#e8788a" stroke-width="3"/>
    ${t(62, 93, '1300', 38)}${t(263, 318, '6am', 33)}${t(525, 318, '12pm', 38)}${t(786, 318, '6pm', 33)}${t(1048, 318, '12am', 38)}
    <path d="M88 355h42" stroke="#e0606e" stroke-width="3"/><path d="M423 355h42" stroke="#b3dfc2" stroke-width="3"/><path d="M728 355h42" stroke="#b5e3ee" stroke-width="3"/>
    <g font-weight="500" font-size="17.5" fill="#3a475c"><text x="150" y="360" textLength="225">On Going Report Number</text><text x="485" y="360" textLength="197">Normal Report Number</text><text x="794" y="360" textLength="332">Paired Report Number from Past Event</text></g></svg>`;
  }
});

/* ---------- tables ---------- */
const sort = '<svg width="4" height="6" viewBox="0 0 8 12"><path d="M4 0l4 5H0zM4 12l4-5H0z" fill="#76879c"/></svg>';
customElements.define('report-table', class extends Part {
  view() {
    const d = '#2b3646', n = '#0d2240';
    const sel = B(831, 80, 11, 'background:#efefef;border-radius:4px;justify-content:space-between;padding:0 10px 0 4px', T(0, 46, 'Unidentified', 7.9, 400, '#22324a').h + '<svg width="6" height="4"><path d="M.3.5h5L2.8 3.2z" fill="#76879c"/></svg>');
    return `<style>:host{width:367.5px;height:212px;background:#fff;border-radius:10px;overflow:hidden}.tabs{display:flex;height:17.5px}.a{width:183px;background:#f1f1f2}.b{flex:1;background:#c1c5c8}.hd{height:18px;border-bottom:1px solid #e8eaed}.bd{display:flex}</style>
    <div class="tabs"><div class="a">${rows(545.5, 452, [[462, T(601.5, 76, 'List of New Reports', 8, 600, n)]])}</div><div class="b">${rows(728.5, 452, [[461.3, T(780, 88.5, 'List of Related Reports', 8, 600, n)]])}</div></div>
    <div class="hd">${rows(545.5, 469.5, [[479.5, T(559.5, 19, 'Time', 8, 500, '#222'), B(579, 4, 6, '', sort), T(617.5, 51, 'Report Name', 7.9, 500, '#222'), T(691.5, 50, 'Uploaded By', 7.9, 500, '#222'), T(770.7, 28, 'Priority', 7.9, 500, '#222'), B(805.5, 4, 6, '', sort), T(835, 36.5, 'Category', 7.9, 500, '#222'), B(877.5, 4, 6, '', sort)]])}</div>
    <div class="bd">${rows(545.5, 487.5, [[501, T(556.3, 45, 'March 27, 2020', 5.9, 600, n)], [508, T(562.3, 30, '6:38  GMT', 5.9, 600, n)], [523, T(556.6, 45, 'March 27, 2020', 5.9, 600, n)], [530.7, T(562.6, 30, '6:39  GMT', 5.9, 600, n)], [540, T(556.6, 45, 'March 27, 2020', 5.9, 600, n)], [547, T(562.6, 30, '6:30  GMT', 5.9, 600, n)]], 62)}
    ${rows(607.5, 487.5, [[505, T(617.5, 45, '239388243', 8, 400, d)], [524.3, T(617.5, 43.5, '203891039', 8, 400, d)], [545, T(617.5, 42, '736742133', 8, 400, d)]], 80)}
    ${rows(687.5, 487.5, [[504.3, T(691.5, 36, 'Xing2734', 8, 400, d)], [523.3, T(691.5, 39, 'Morris234', 8, 400, d)], [544.3, T(691.5, 44.5, 'Manny45xe', 8, 400, d)]], 80)}
    ${rows(767.5, 487.5, [[505.3, T(771.5, 31, 'Medium', 8, 400, d)], [524.3, T(771.5, 15.5, 'Low', 8, 400, d)], [544.3, T(771.5, 31, 'Medium', 8, 400, d)]], 60)}
    ${rows(827.5, 487.5, [[504.5, sel], [525.3, sel], [545.7, sel]])}</div>`;
  }
});
customElements.define('ongoing-events', class extends Part {
  view() {
    const n = '#0d2240', g = '#34465e', ck = k => { let c = []; for (let i = 0; i < k; i++) c.push(B(844.7 + i * 10.45, 8.3, 8.3, 'border:1px solid #8a93a0;border-radius:50%')); return c; };
    const nw = x => B(x, 19, 8.6, 'background:#0d2240;border-radius:2.5px', T(0, 13.5, 'NEW', 5.3, 600, '#fff').h);
    return `<style>:host{width:367.5px;height:155.5px;background:#fff;border-radius:10px;overflow:hidden}.hd{height:34.3px;background:#d8dcdf}.bd{display:flex;height:97px;border-bottom:1px solid #e3e6ea}</style>
    <div class="hd">${rows(545.5, 695.7, [[714.5, T(563.3, 23, 'Time', 9.2, 600, n), B(592.5, 4, 6, '', sort), T(634.5, 57.5, 'Event Name', 9.2, 600, n), T(748.3, 55.5, 'Description', 9.2, 600, n), T(839, 61.5, 'Impact Level', 9.2, 600, n)]])}</div>
    <div class="bd">${rows(545.5, 730, [[740.8, T(555.3, 45, 'March 27, 2020', 5.9, 600, n)], [748, T(561.3, 34, '04:20  GMT', 5.9, 600, n)], [762, T(555.3, 45, 'March 27, 2020', 5.9, 600, n)], [769, T(561.3, 34, '04:32  GMT', 5.9, 600, n)], [785, T(555.3, 45, 'March 27, 2020', 5.9, 600, n)], [792, T(561.5, 30, '4:50  GMT', 5.9, 600, n)], [809, T(555.3, 45, 'March 27, 2020', 5.9, 600, n)], [816, T(561.5, 30, '4:59  GMT', 5.9, 600, n)]], 70)}
    ${rows(615.5, 730, [[745, B(618, 89, 22, 'background:#04142f;border-radius:5px', T(0, 73, 'Dyn Cyberattack', 8.8, 600, '#fff').h)], [766.2, T(626.5, 72.5, 'Ongoing Event A', 8.8, 600, n)], [789, T(626.5, 72, 'Ongoing Event B', 8.8, 600, n)], [812, T(626.5, 72.5, 'Ongoing Event C', 8.8, 600, n), nw(704)]], 108)}
    ${rows(723.5, 730, [[743.5, T(766.5, 15, 'Dyn', 7.9, 400, g)], [766.5, T(732.5, 85, 'Payment card network', 7.9, 400, g)], [789.3, T(722.5, 104, 'Domain name, Root servers', 7.9, 400, g)], [812.3, T(736.7, 81.5, 'Virus, Microsoft Word', 7.9, 400, g)]], 110)}
    ${rows(833.5, 730, [[744.8, ...ck(5)], [766.8, ...ck(4)], [788.8, ...ck(3)], [812, ...ck(2)]])}</div>
    ${rows(545.5, 827, [[839, T(626.7, 46.5, 'New Event', 8.8, 500, '#000'), nw(681)]])}`;
  }
});

/* ---------- related events timeline ---------- */
const TL = `162 g 257,48 03.16.2016 79 JO365,23 KS411,19 HS450,15 NK493,23 PS540,19 IL572,9 GA608,23 NE653,16 JC687,13 AC718,13 SJ745,9 EB777,19
249 g 252,24 03.16.2016 68 KS361,18 HS400,15 PS438,17 IL470,8 GA508,23 JC548,13 AC580,13 EB616,18 SC652,13 SC681,13
321 p 252,24 03.16.2016 79 JO364,23,y KS411,19,y NK457,23,n* PS505,18,n SS544,16,v JC577,13,v AC608,13,v PX649,22,b EB694,19,b
421 p 254,53 03.16.2016 68 JO364,22,y KS411,19,y HS450,15,y NK492,23,n* PS540,18,n SS579,16,v JC613,13,v AC643,13,v SJ671,9,v EB703,19,b PX748,21,b SC787,14,b
532 g 255,40 03.16.2016 68 JO364,22 KS411,19 PS453,18 SS492,16 AC526,13 PX565,22 SC607,13 SC636,13
617 g 252,30 03.16.2017 68 JO361,22 KS408,18 SS447,15 EB487,18 SC523,13 SC552,13
707 g 255,40 03.16.2017 68 KS358,19 HS397,14 PS435,18 IL468,8 GA505,23 JC546,14 AC577,13 EB614,19 SC650,13 SC678,13
793 p 256,27 03.16.2017 58 KS358,19,y NK406,24,n* PS453,18,n SS491,16,v JC526,12,v AC556,13,v EB594,19,b PX640,22,b
878 g 255,40 03.16.2017 68 JO361,22 KS408,19 PS450,18 SS490,16 AC523,13 PX562,22 SC601,13 EB637,18 SC673,13
987 p 255,48 03.16.2018 68 JO361,22,y HS403,14,y NK448,23,n* PS494,18,n SS533,16,v JC566,13,v AC597,13,v SJ625,9,v PX658,22,b SC697,13,b EB733,19,b SC769,13,b
1077 p 252,24 03.16.2018 79 JO361,22,y KS408,19,y PS450,18,n SS489,16,v AC523,13,v EB561,17,b SC596,13,b PX634,22,b*
1162 g 257,53 03.16.2018 68 JO361,22 KS408,18 HS447,14 NK490,23 PS537,18 IL569,8 GA606,23 SS650,16 JC684,13 AC715,13 SJ742,8 EB774,18
1253 k 256,25 03.16.2019 68 JO361,22,k KS408,18,k NE447,15,k EB488,18,k* EB529,18,k SC565,12,k`;
customElements.define('event-timeline', class extends Part {
  view() {
    const C = { g: '#bbbcc0', p: '#a591bd', y: '#e9c95a', n: '#62a97a', v: '#6f74ab', b: '#24579b', k: '#4a4a4a' };
    let s = '', dots = '';
    TL.split('\n').forEach((l, ci) => {
      const [x, k, hd, date, pc, ...it] = l.split(' '), X = x / K, [hy, hr] = hd.split(',');
      s += `<circle cx="${f1(X)}" cy="${hy / 3}" r="${hr / 3}" fill="${k === 'k' ? '#2d2d2d' : C[k]}"/>`;
      if (ci > 1) dots += `<rect x="${f1(X - .8)}" y="85.2" width="1.6" height="1.6" fill="#111"/>`;
      s += `<text x="${f1(X - 10.5)}" y="103" font-size="4.3" font-weight="500" textLength="21" fill="${ci < 2 ? '#8b9bb0' : '#222'}">${date}</text>`;
      s += `<path d="M${f1(X)} 115V${f1(it.at(-1).slice(2).split(',')[0] / 3)}" stroke="#ccc" stroke-width=".4"/>`;
      it.forEach(i => {
        const nm = i.slice(0, 2), [y, r, c] = i.slice(2).split(','), Y = y / 3, R = r / 3, cc = C[(c || 'g')[0]];
        s += `<circle cx="${f1(X)}" cy="${f1(Y)}" r="${f1(R)}" fill="${cc}"/>`;
        if (c && c[1]) s += `<circle cx="${f1(X)}" cy="${f1(Y)}" r="${f1(R + 1)}" fill="none" stroke="#fff" stroke-width=".8"/><circle cx="${f1(X)}" cy="${f1(Y)}" r="${f1(R + 1.5)}" fill="none" stroke="#555" stroke-width=".5"/>`;
        s += `<text x="${f1(X)}" y="${f1(Y + 1.4)}" font-size="${R < 4 ? 3 : 4.1}" font-weight="600" text-anchor="middle" fill="#fff" fill-opacity=".9">${nm}</text>`;
      });
      const act = k !== 'g', L = 2 * Math.PI * 6.4;
      s += `<circle cx="${f1(X)}" cy="281" r="6.4" fill="none" stroke="${act ? '#dadbec' : '#e6e6e8'}" stroke-width="1"/><circle cx="${f1(X)}" cy="281" r="6.4" fill="none" stroke="${act ? C.v : '#b9babd'}" stroke-width="1.1" stroke-dasharray="${f1(L * .6)} ${f1(L)}" transform="rotate(60 ${f1(X)} 281)"/><text x="${f1(X)}" y="282" font-size="2.9" text-anchor="middle" fill="${act ? C.v : '#b9babd'}">${pc}%</text>`;
    });
    return `<style>:host{width:514px;height:237px;background:#fff;border-radius:10px;overflow:hidden;box-shadow:0 0 1px #cfd4db}</style>
    <svg width="514" height="237" viewBox="15 56 514 237"><circle cx="493.5" cy="85" r="21.5" fill="#cbbcda"/><circle cx="493.5" cy="84.5" r="17" fill="#aa96c0"/>${s}
    <path d="M56 85.9H494" stroke="#333" stroke-width=".45" stroke-dasharray="1 .6"/>${dots}<rect x="492.7" y="85.2" width="1.6" height="1.6" fill="#111"/>
    <text x="493.5" y="99" font-size="4.6" font-weight="500" text-anchor="middle" fill="#222">CURRENT</text><text x="493.5" y="105" font-size="4.6" font-weight="500" text-anchor="middle" fill="#222">EVENT</text></svg>`;
  }
});

/* ---------- expert card ---------- */
customElements.define('expert-card', class extends Part {
  view() {
    const n = '#12233f', gr = '#8f98a5', J = x => 1440 + x / 2.8457;
    const tt = (l, r, s, fs = 8, fw = 400, c = n) => T(J(l), (r - l) / 2.8457, s, fs, fw, c);
    const badge = (l, r, s) => B(J(l), (r - l) / 2.8457, 10, 'border:1px solid #5b8def;border-radius:4px', `<span class="t" style="font-size:7.4px;font-weight:500;color:#2f6fe8">${s}</span>`);
    const pill = (l, r, s, a, b, z) => B(J(l), (r - l) / 2.8457, 20, 'border:1px solid #eceef1;border-radius:10px;background:#fff', T(0, (b - a) / 2.8457, s, 11.6, 400, z || '#1c2e4a').h);
    const ic = (l, w, p) => B(J(l), w, 11, '', `<svg width="${w}" height="11" viewBox="0 0 ${w} 11">${p}</svg>`);
    return `<style>:host{width:509px;height:237px;background:#fff;border-radius:10px;overflow:hidden;box-shadow:0 0 1px #cfd4db;display:flex;flex-direction:column}.tabs{display:flex;height:16px;background:#c1c5c8;flex:none}.a{width:191px;background:#f1f1f2}</style>
    <div class="tabs"><div class="a">${rows(1458, 56, [[64, T(1467.2, 5, '×', 10, 400, '#5a6878'), tt(238, 357, 'Yuran3454', 7.8), T(1632.8, 6, '×', 10, 400, '#5a6878')]])}</div>${rows(1649, 56, [[64, tt(731, 841, 'PrinceX32', 7.8), T(1821.7, 6, '×', 10, 400, '#76838f'), tt(1243, 1352, 'Susie2012', 7.8)]])}</div>
    <div style="display:flex;height:73px;flex:none">${rows(1458, 72, [[102, B(1479.3, 41, 41, 'background:#f1e2ac;border-radius:10px', '<svg width="23" height="21" viewBox="0 0 23 21" fill="none" stroke="#fff" stroke-width="1.5"><circle cx="11.5" cy="5.5" r="4"/><path d="M1.5 19.5v-2c0-3 2.5-5 5-5h10c2.5 0 5 2 5 5v2z"/></svg>')]], 70)}
    ${rows(1528, 72, [[88, tt(281, 500, 'Yuran3454', 13.8, 600, '#0d2240'), B(J(519), 38.5, 12.5, 'border:1px solid #5b8def;border-radius:7px', T(0, 23, 'Expert', 7, 500, '#2f6fe8').h)], [108.5, tt(281, 1399, 'Bio/ Profile : Lorem ipsum dolor sit amet, consectetur adipiscing elit. Nulla cursus', 9.7, 400, gr)], [120.5, tt(281, 1334, 'vulputate mau ipsum dolor sit amet, consectetur adipiscing elit. Nulla cursus', 9.7, 400, gr)], [132.6, tt(281, 476, 'vulputate mau', 9.7, 400, gr)]])}</div>
    <div style="height:35px;flex:none">${rows(1458, 145, [[161, ic(116, 11, '<path d="M2 2l7.5 7M9.5 1.5L2 9.500" stroke="#12233f" stroke-width="1.8" fill="none"/><path d="M.5 3L3 .5M7 2.500a2.500 2.500 0 0 1 3.500 1.500M8 8.500L10 10.500" stroke="#12233f" stroke-width="1.6" fill="none"/>'), tt(161, 215, 'Skill', 9.4, 400, n), ic(308, 9, '<path d="M.8.8h4.500l3 3v6.600h-7.500z" fill="none" stroke="#12233f" stroke-width="1.3"/>'), tt(346, 408, 'Files', 9.4, 400, n), badge(428, 474, '11'), ic(583, 13, '<path d="M.7 1.200h11.600v6.500h-11.600z" fill="none" stroke="#12233f" stroke-width="1.3"/><path d="M0 10h13M3.500 4l1.500 2 1.500-2 1.500 2 1.500-2" stroke="#12233f" stroke-width="1.2" fill="none"/>'), tt(642, 735, 'Events', 9.4, 400, n), badge(751, 797, '8'), ic(882, 10.5, '<rect width="10.5" height="10.5" rx="1" fill="#12233f"/><path d="M5.200 2.200l.9 2.100 2.300.2-1.700 1.500.5 2.200-2-1.200-2 1.200.5-2.200-1.700-1.500 2.300-.2z" fill="#fff"/>'), tt(924, 1011, 'Rating', 9.4, 400, n), badge(1032, 1089, '4.1'), ic(1176, 17, '<g fill="none" stroke="#12233f" stroke-width="1.3"><circle cx="6.5" cy="3" r="1.8"/><circle cx="12" cy="3" r="1.8"/><path d="M3.500 10V8.500c0-1 1-1.800 2-1.800h2.500c1 0 2 .8 2 1.800V10zM12 6.700c2 0 4 .8 4 2V10h-4"/></g><path d="M0 8.500h2.200V10.500H0zM1.500 3h2v1.500h-2z" fill="#12233f"/>'), tt(1234, 1322, 'Teams', 9.4, 400, n), badge(1341, 1387, '3')], [179, B(J(93), 56, 1.6, 'background:#2f6fe8'), B(J(253), 430, 1, 'background:#f3f4f6')]])}</div>
    ${rows(1458, 180, [[209, pill(76, 330, 'C/C++', 147, 253), pill(342, 521, 'Perl', 399, 461), pill(535, 696, 'Java', 576, 650), pill(711, 911, 'Python', 753, 868), pill(932, 1190, '.NET', 1022, 1099), pill(1225, 1482, 'Mirai', 1316, 1395)], [237, pill(86, 377, 'Linux', 193, 280), pill(397, 654, 'Windows', 452, 601), pill(666, 923, 'MongoDB', 713, 875), pill(933, 1191, 'Fiddler', 1010, 1123), pill(1214, 1409, 'Paros', 1264, 1356)], [265, pill(76, 470, 'Filter development', 120, 429), pill(486, 846, 'Exploits analysis', 534, 806), pill(865, 1205, 'IoT development', 905, 1181), pill(1214, 1471, 'Wireshark', 1262, 1426)]])}`;
  }
});

/* ---------- constellation graph ---------- */
customElements.define('constellation-graph', class extends Part {
  view() {
    const P = { a: [1590, 402.7], b: [1567, 438], c: [1624.4, 450], d: [1742.7, 414], e: [1730, 424.7], f: [1789, 548.3], g: [1830.7, 542.3], h: [1830, 578.3], i: [1652.2, 648.3], j: [1663.4, 712.7] };
    const L = 'bj#9cc4e8,2;bi#c3b6de,1;bj#cdbfe2,3.5;ci#d5c9e8,-2;cj#d97fb8,1.5;cj#c3b6de,0;cj#dccfe9,-4;di#cbbfe2,0;dj#ef9d6c,-1.8;dj#8f9fd8,-.3;dj#8ecdf0,1.5;ej#e3daee,-3;fj#dbbfcf,0;fj#e0d2dc,.9;gj#c9c0e2,0;gj#dad3ec,-1.8;hj#c9b3da,1;fh#b3a0d2,0;gh#c0a5d2,0;dg#b9d6b0,0;dh#c3b6de,-1;dh#d9b3c8,1.5;df#d5cbe6,0;cf#e0b8c4,1;cg#cabede,0;bf#b4d4a8,0;bf#e5c2a8,1.5;bh#c9bfe2,-1;cd#d6cbe8,0;bd#c9bfe2,-1;be#d6cbe8,1;ce#e5d2dc,0'.split(';');
    let s = L.map(l => { const p = P[l[0]], q = P[l[1]], [c, o] = l.slice(2).split(','); const dx = q[0] - p[0], dy = q[1] - p[1], n = Math.hypot(dx, dy), ux = -dy / n * o, uy = dx / n * o; return `<path d="M${f1(p[0] + ux)} ${f1(p[1] + uy)}L${f1(q[0] + ux)} ${f1(q[1] + uy)}" stroke="${c}" stroke-width="1.2"/>`; }).join('');
    const N = [['a', 13.5, '#f1e6a0'], ['b', 7, '#f0e090'], ['c', 11, '#f1e6a0'], ['d', 7, '#c9b3da'], ['e', 5.5, '#d8cbe4'], ['f', 15, '#809dd0'], ['g', 7.5, '#809dd0'], ['h', 7.5, '#809dd0']];
    s += N.map(n => `<circle cx="${P[n[0]][0]}" cy="${P[n[0]][1]}" r="${n[1]}" fill="${n[2]}"/>`).join('');
    s += '<circle cx="1652.2" cy="648.3" r="13.5" fill="#8ccdab" fill-opacity=".88"/><circle cx="1663.4" cy="712.7" r="8.5" fill="#9ad3b4"/><path d="M1649 636L1656 661M1653 636L1658 660" stroke="#8a6fa5" stroke-width=".8"/>';
    const D = { t: '#8fd0ce', b: '#9bd3ee', n: '#88a1d4', p: '#9f7fbd', k: '#e68fc0', y: '#f1d94f', o: '#f3b195', g: '#86c57d' };
    const M = 't. 1055,282,5 1065,285,5 1073,283,5 1075,319,6 1088,324,5|b. 1113,318,7 1124,320,8 1137,325,5 1118,335,9 1131,341,6 1110,330,6 1115,345,6 1122,330,6|n. 1135,296,4 1098,343,5 1092,355,7 1100,355,6 1107,362,4 1125,386,4 1175,377,4 1193,388,7 1219,374,7 1232,381,6 1229,390,6 1213,395,7 1230,403,5 1181,413,4 1222,429,4 1206,385,6|n! 1180,402,7 1206,405,9 1194,430,4|p. 1148,348,7 1102,418,7 1113,437,6 1083,468,6 1084,491,6 1080,478,5|p! 1087,449,5 1085,458,6 1090,470,6|k. 1071,478,5 1072,492,5 1066,506,4 1077,507,4 1063,517,4 1081,538,4 1088,545,4|y. 1157,462,5 1169,467,4 1160,481,3 1122,524,3 1105,551,5 1103,562,4 1121,563,3 1121,574,4 1133,536,3 1132,592,4 1134,603,3 1120,540,2|y! 1137,563,6 1108,575,6|o. 1142,579,6 1174,580,7 1165,590,4 1174,619,4 1181,630,6 1190,654,6 1176,662,6 1199,665,5 1187,671,5 1175,648,4 1202,684,5 1214,691,4|g. 1219,512,5 1220,524,6 1230,528,4 1209,589,5 1197,598,4 1209,629,6 1217,638,6 1221,655,5 1199,646,3 1231,623,5|g! 1225,623,6 1230,639,6';
    s += '<rect x="1762.5" y="664.5" width="106.5" height="160" rx="12" fill="#fff" stroke="#d8dbe2" stroke-width="1.2"/>' + M.split('|').map(g => { const [h, ...it] = g.split(' '); return it.map(i => { const [x, y, r] = i.split(','); return `<circle cx="${f1(1340 + x / 2.4086)}" cy="${f1(580 + y / 3)}" r="${f1(r / 2.6)}" fill="${D[h[0]]}" opacity="${h[1] === '!' ? .9 : .32}"/>`; }).join(''); }).join('');
    return `<style>:host{width:509px;height:540px;background:#fff;border-radius:10px;overflow:hidden;box-shadow:0 0 1px #cfd4db}.h{height:43.5px;border-bottom:1px solid #dfe3e8}.b{display:flex}.g{width:415.5px;height:496px;border-right:1px solid #eceff3;flex:none}</style>
    <div class="h">${rows(1458, 311, [[330.7, T(1916.5, 19, 'Skill', 8.8, 400, '#0d2240')], [342.7, T(1902.5, 47, 'Keywords', 8.8, 500, '#0d2240')]])}</div>
    <div class="b"><div class="g"><svg width="415" height="496" viewBox="1458 354.5 415 496" style="overflow:hidden">${s}</svg></div><keyword-list kind="skill"></keyword-list></div>`;
  }
});

/* ---------- constellation builder (floating) ---------- */
customElements.define('constellation-builder', class extends Part {
  view() {
    const J = x => x / 2.4086, X = x => f1(1340 + J(x)), Y = y => f1(300 + y / 3);
    let s = '';
    const cols = [[108, '#b79fcf', '#e0d6ea', '#5a49a8', '504,23! 557,22! 604,17 646,17 687,16 726,16! 762,13 793,13 822,11 848,8'], [188, '#f0e2a8', '#f8f0cf', '#efd04e', '507,28! 566,23! 615,19! 660,16 699,15 740,15 773,15 808,14 842,12'], [270, '#7c9bd2', '#c8d5ec', '#2461ba', '507,33! 570,27! 626,24! 678,22 727,21 771,18 813,16 846,10'], [352, '#a1d9b7', '#d0ebdc', '#a9d8a0', '507,31! 572,28 633,28 694,26 752,22! 801,21 846,17']];
    for (const [x, a, b, dc, d] of cols) {
      s += `<path d="M${X(x)} 452V587" stroke="#dde0ea" stroke-width="1"/><circle cx="${X(x)}" cy="452.7" r="2.2" fill="${dc}"/>`;
      s += d.split(' ').map(i => { const h = i.endsWith('!'), [y, r] = i.replace('!', '').split(','); return `<circle cx="${X(x)}" cy="${Y(+y)}" r="${f1(r / 3)}" fill="${h ? a : b}"/>`; }).join('');
    }
    const tx = (l, r, y, t) => `<text x="${X(l)}" y="${y}" font-size="7.4" textLength="${f1(J(r - l))}" fill="#1c2e4a">${t}</text>`;
    s += tx(80, 135, 447, 'Skill 5') + tx(165, 216, 447, 'Skill 1') + tx(245, 298, 447, 'Skill 6') + tx(324, 381, 447, 'Skill 4') + tx(420, 467, 447, 'Team');
    s += [[496, 1, '#d9c4e0'], [553, 2, '#d9dcdf'], [608, 3, '#d9dcdf'], [664, 4, '#d9dcdf'], [720, 5, '#d9dcdf'], [779, 6, '#d9dcdf']].map(([y, n, c]) => `<rect x="1518" y="${f1(300 + y / 3 - 6)}" width="12" height="12" rx="1.5" fill="${c}"/><text x="1524" y="${f1(300 + y / 3 + 2.8)}" font-size="7.6" text-anchor="middle" fill="#222">${n}</text>`).join('');
    const U = (x, y) => f1(1340 + x / 2.4086) + ' ' + f1(580 + y / 3);
    const dia = (t, r, b, l, c, st) => `<path d="M${U(270, t)}L${U(r, 312)}L${U(270, b)}L${U(l, 312)}Z" fill="${c}" ${st ? `stroke="${st}" stroke-width=".7"` : ''}/>`;
    const rad = dia(122, 424, 492, 124, 'none', '#dfe3e3') + dia(122, 392, 490, 126, '#8ecb95') + dia(142, 360, 485, 134, 'none', '#e8f4e8') + dia(163, 350, 500, 145, '#9ba9d0') + dia(180, 345, 470, 150, 'none', '#dfe5f3') + dia(186, 345, 440, 145, '#e9dc92') + dia(195, 338, 430, 152, 'none', '#fff') + dia(207, 330, 420, 160, 'none', '#fff') + dia(230, 328, 400, 153, '#ab86bb') + dia(246, 322, 386, 185, 'none', '#e5d8ea') + dia(253, 315, 370, 203, 'none', '#fff') + dia(262, 309, 362, 229, '#d9d0d0');
    s += `<path d="M${U(98, 311)}H${X(126)}M${U(392, 311)}H${X(437)}M${U(270, 101)}V621M${U(270, 490)}V752.5" stroke="#b9c6c0" stroke-width="1"/>${rad}<circle cx="${X(270)}" cy="613.7" r="2.6" fill="#ebd67a"/><circle cx="${X(98)}" cy="683.7" r="2.6" fill="#a685bd"/><circle cx="${X(437)}" cy="683.7" r="2.6" fill="#8ecb95"/><circle cx="${X(270)}" cy="752.7" r="2.6" fill="#8fa3d0"/>`;
    return `<style>:host{display:flex;flex-direction:column;align-items:center;width:176px}
    .card{width:176px;height:370.5px;background:#fff;border:1px solid #d5d8dd;border-radius:0 0 9px 9px;overflow:hidden;display:flex;flex-direction:column}.h{height:34.5px;background:#d8dcdf;flex:none}
    .p{height:158px;border-bottom:1.5px solid #dfe2e6;flex:none;display:flex}.p svg{flex:none}.vl{margin-left:145px;width:1px;height:158px;background:#dfe2e6}
    .s{margin-top:15px;width:106px;height:31px;border-radius:16px;background:#fff;border:1px solid #dcdfe4;display:flex;align-items:center;justify-content:center}</style>
    <div class="card"><div class="h">${rows(1364, 395, [[413, T(1400.5, 93, 'Constellation', 13, 500, '#0d2240')]])}</div>
    <div class="p"><svg width="1" height="158" viewBox="1364 430 1 158">${s}</svg><div class="vl"></div></div>
    ${rows(1364, 588, [[599.5, T(1413.5, 73.5, 'Team Experties', 9.2, 500, '#1c2e4a')]])}</div>
    <div class="s"><span class="t" data-w="47.5" style="font-size:11.5px;font-weight:500;color:#0d2240;margin-top:2px">SUBMIT</span></div>`;
  }
});

/* ---------- logo ---------- */
customElements.define('app-logo', class extends Part {
  view() {
    return `<style>:host{display:flex;gap:7px;width:110px;height:34px}.n{display:flex;flex-direction:column}.n .t{height:14px;line-height:14px;margin:0}</style>
    <svg width="25" height="33" viewBox="0 0 25 33" fill="none" stroke="#30405a" stroke-width=".7"><path d="M11 1.5L3 4.5L0 17L11 1.5L19 4L24 14L3 4.5M11 1.5L24 14M19 4L3 4.5M24 14L13 21M3 4.5L13 17M0 17L6 25L15 31L19 24L9 27L19 24L10 20L15 31"/><g stroke="none" fill="#2f5fc0"><circle cx="11" cy="1.7" r="1.5"/><circle cx="9" cy="27" r="1.5"/><circle cx="15" cy="30" r="1.5"/><circle cx="19" cy="4.5" r="1.5" fill="#e0304a"/></g></svg>
    <div class="n" style="padding-top:3px"><span class="t" data-w="78" style="font-size:11.8px;font-weight:500;color:#0d1f3a">Constellation</span><span class="t" data-w="40" style="font-size:11.8px;font-weight:500;color:#0d1f3a;margin-top:.5px">Builder</span></div>`;
  }
});

/* ---------- region frames and labels ---------- */
customElements.define('region-overlay', class extends Part {
  view() {
    return `<style>:host{position:absolute;left:0;top:0;width:1991px;height:871px}text{fill:#3a3a3a}svg text{font:80px "Liberation Sans",Arial,sans-serif}</style>
    <svg width="1991" height="871" viewBox="0 0 1991 871"><g fill="none" stroke-width="10" stroke-linejoin="miter">
    <path d="M14 27.5H908.3V652.5H520.5V862H14Z" stroke="#f00"/>
    <path d="M923.3 26.5H1440V377H1333V861H539V674H923.3Z" stroke="#f0d36f"/>
    <path d="M1461.6 31.5H1972.7V862H1353V394.7H1461.6Z" stroke="#0f71ac"/></g>
    <g fill="#fff" fill-opacity=".8"><rect x="213" y="350" width="458" height="135"/><rect x="899" y="350" width="456" height="135"/><rect x="1476" y="252" width="471" height="297"/></g>
    <text x="231" y="445" textLength="430">Report View</text><text x="915.5" y="445" textLength="397">Event View</text>
    <text x="1487.5" y="345.7">Team</text><text x="1485.5" y="442" textLength="466">Constellation</text><text x="1489" y="537.7">View</text></svg>`;
  }
});

/* ---------- page ---------- */
customElements.define('cb-app', class extends Part {
  view() {
    const ti = (text, w, dx = 0) => `<section-title text="${text}" w="${w}" dx="${dx}"></section-title>`;
    return `<style>:host{width:1991px;height:871px;position:relative;overflow:hidden;background:#ebeef4}
    main{display:flex;height:871px;padding-left:19px}.col{display:flex;flex-direction:column;flex:none}.docs{display:flex;gap:20px}
    .bld{position:absolute;left:1363.5px;top:395px}.logo{position:absolute;left:1858.5px;top:12px}</style>
    <main>
    <div class="col" style="width:513px;margin-right:13.5px">${blocks(0, [[32, 16, `<div style="margin-left:-3px">${ti('Detailed Report View', 126)}</div>`], [56, 237, '<div class="docs"><report-doc doc="a"></report-doc><report-doc doc="b"></report-doc></div>'], [311, 540, '<report-keywords></report-keywords>']])}</div>
    <div class="col" style="width:367.5px;margin-right:17px">${blocks(0, [[31, 16, ti('Monitoring View', 97)], [55, 237, '<monitor-map></monitor-map>'], [310, 115, '<trend-chart></trend-chart>'], [434, 16, ti('List of Reports', 86.5, 1)], [452, 212, '<report-table></report-table>'], [677, 16, ti('List of Ongoing Events', 132.5, 7)], [695.7, 155.5, '<ongoing-events></ongoing-events>']])}</div>
    <div class="col" style="width:514px;margin-right:14px">${blocks(0, [[32, 16, ti('Close Related Events', 126)], [56, 237, '<event-timeline></event-timeline>'], [311, 540, '<event-keywords></event-keywords>']])}</div>
    <div class="col" style="width:509px">${blocks(0, [[32, 16, ti('Expert Details', 83.5)], [56, 237, '<expert-card></expert-card>'], [311, 540, '<constellation-graph></constellation-graph>']])}</div>
    </main><app-logo class="logo"></app-logo><constellation-builder class="bld"></constellation-builder><region-overlay></region-overlay>`;
  }
});
</script>
</body>
</html>
